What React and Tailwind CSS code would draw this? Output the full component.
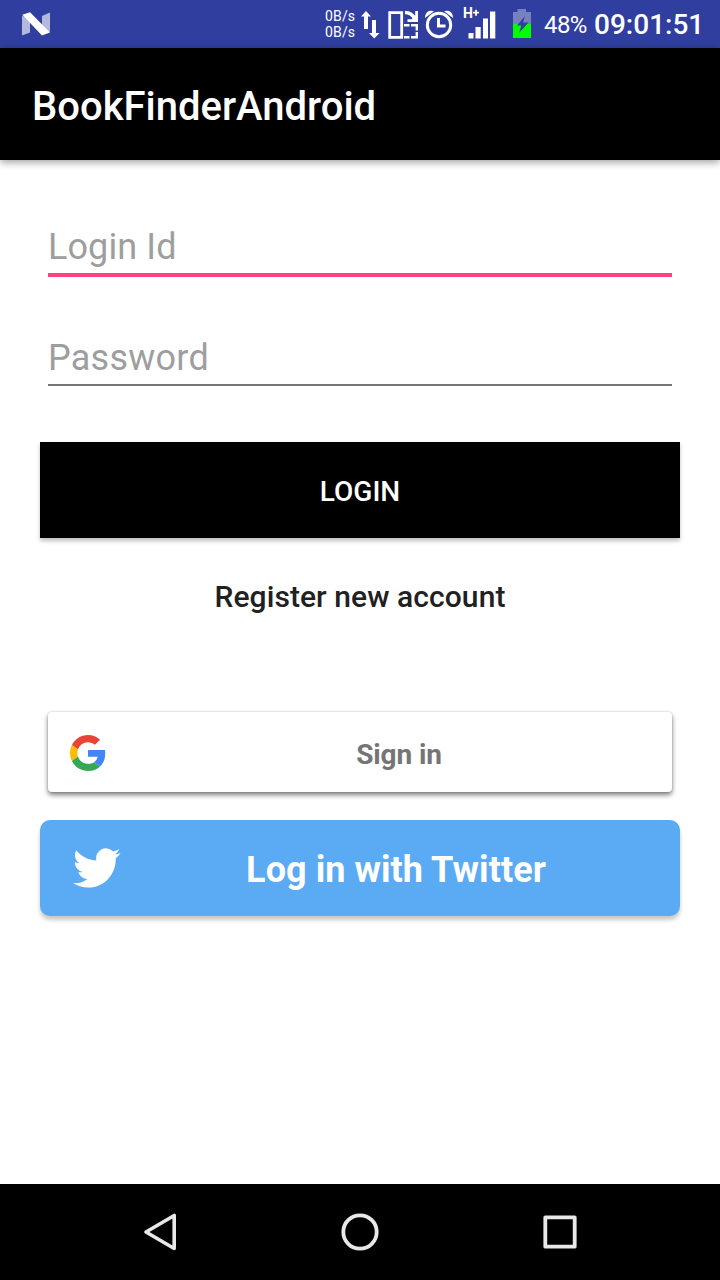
function StatusBar() {
  return (
    <div className="flex h-12 shrink-0 items-center bg-[#303f9f] text-white">
      <svg className="ml-5 shrink-0" width="32" height="48" viewBox="20 0 32 48">
        <path d="M22 15.5L30 20V32.5L22 35.5Z" fill="#b3b8dc" />
        <path d="M50 12.5L42 16V29L50 32Z" fill="#b3b8dc" />
        <path d="M22.3 14.8L30 12.2L50 32.5L42 35.6Z" fill="#fff" />
      </svg>
      <div className="ml-[273px] w-[35px] text-[14px] leading-4 tracking-[0.15px]">
        <div>0B/s</div>
        <div>0B/s</div>
      </div>
      <svg className="shrink-0" width="24" height="48" viewBox="360 0 24 48" fill="#fff">
        <path d="M366 11L371 16.5H368V29H364V16.5H361Z" />
        <path d="M372 20H376V33H379.5L374.3 38.5L369 33H372Z" />
      </svg>
      <svg className="shrink-0" width="38" height="48" viewBox="384 0 38 48" fill="none" stroke="#fff">
        <path d="M389.7 12.7H401.7V37.3H389.7Z" strokeWidth="2.8" />
        <path d="M404 25.2H409.5M411 25.2H418M404 37.2H409.5M411 37.2H418M416.8 25V30.5M416.8 32V38" strokeWidth="2.4" />
        <path d="M405 12.5C409 12.5 412.5 14.5 414.5 18.5" strokeWidth="3.6" />
        <path d="M416.6 11V20.7H407.5" strokeWidth="2.8" />
        <path d="M411 20.5L416.5 15V20.5Z" fill="#fff" strokeWidth="1" />
      </svg>
      <svg className="shrink-0" width="36" height="48" viewBox="422 0 36 48" fill="none" stroke="#fff">
        <circle cx="439" cy="25" r="11.7" strokeWidth="3" />
        <path d="M438.5 18V26H445.5" strokeWidth="3" />
        <path d="M425 18C425 12 429 9.5 434 11.2Z" fill="#fff" stroke="none" />
        <path d="M453 18C453 12 449 9.5 444 11.2Z" fill="#fff" stroke="none" />
      </svg>
      <div className="relative h-12 w-[50px] shrink-0">
        <span className="absolute top-[5px] left-[5px] text-[14px] leading-[16px] font-bold">H</span>
        <svg width="50" height="48" viewBox="458 0 50 48" fill="#fff">
          <path d="M468.5 33H473.5V38.5H468.5ZM475.5 27H480.7V38.5H475.5ZM483 18.5H488V38.5H483ZM490 11.5H495.3V38.5H490Z" />
          <path d="M473 11.8H479V13.6H473ZM475.1 9.7H476.9V15.7H475.1Z" />
        </svg>
      </div>
      <svg className="shrink-0" width="36" height="48" viewBox="508 0 36 48">
        <path d="M517.5 9H526V12H531V38H513V12H517.5Z" fill="#7881c0" />
        <path d="M513 24H531V38H513Z" fill="#0f0" />
        <path d="M525 16L517 25.5H521.3L519 33L528.5 22.5H523Z" fill="#303f9f" />
      </svg>
      <span className="w-[50px] pt-[2px] text-[24px] tracking-[-0.6px]">48%</span>
      <span className="pt-[2px] text-[28px] font-medium">09:01:51</span>
    </div>
  );
}

function GoogleLogo() {
  return (
    <svg className="ml-[22px] mt-[2px] shrink-0" width="36" height="36" viewBox="0 0 48 48">
      <path fill="#EA4335" d="M24 9.5c3.54 0 6.71 1.22 9.21 3.6l6.85-6.85C35.9 2.38 30.47 0 24 0 14.62 0 6.51 5.38 2.56 13.22l7.98 6.19C12.43 13.72 17.74 9.5 24 9.5z" />
      <path fill="#4285F4" d="M46.98 24.55c0-1.57-.15-3.09-.38-4.55H24v9.02h12.94c-.58 2.96-2.26 5.48-4.78 7.18l7.73 6c4.51-4.18 7.09-10.36 7.09-17.65z" />
      <path fill="#FBBC05" d="M10.53 28.59c-.48-1.45-.76-2.99-.76-4.59s.27-3.14.76-4.59l-7.98-6.19C.92 16.46 0 20.12 0 24c0 3.88.92 7.54 2.56 10.78l7.97-6.19z" />
      <path fill="#34A853" d="M24 48c6.48 0 11.93-2.13 15.89-5.81l-7.73-6c-2.15 1.45-4.92 2.3-8.16 2.3-6.26 0-11.57-4.22-13.47-9.91l-7.98 6.19C6.51 42.62 14.62 48 24 48z" />
    </svg>
  );
}

function TwitterLogo() {
  return (
    <svg className="ml-[33px] shrink-0" width="48" height="40" viewBox="0 2.1 24.2 19.9" preserveAspectRatio="none" fill="#fff">
      <path d="M23.953 4.57a10 10 0 01-2.825.775 4.958 4.958 0 002.163-2.723c-.951.555-2.005.959-3.127 1.184a4.92 4.92 0 00-8.384 4.482C7.69 8.095 4.067 6.13 1.64 3.162a4.822 4.822 0 00-.666 2.475c0 1.71.87 3.213 2.188 4.096a4.904 4.904 0 01-2.228-.616v.06a4.923 4.923 0 003.946 4.827 4.996 4.996 0 01-2.212.085 4.936 4.936 0 004.604 3.417 9.867 9.867 0 01-6.102 2.105c-.39 0-.779-.023-1.17-.067a13.995 13.995 0 007.557 2.209c9.053 0 13.998-7.496 13.998-13.985 0-.21 0-.42-.015-.63A9.935 9.935 0 0024 4.59z" />
    </svg>
  );
}

function NavigationBar() {
  return (
    <nav className="flex h-24 shrink-0 items-center justify-center gap-[152px] bg-black">
      <svg width="48" height="48" viewBox="0 0 48 48" fill="none" stroke="#e8e8e8" strokeWidth="3.6" strokeLinejoin="round">
        <path d="M10 24L38.2 7.5V40.5Z" />
      </svg>
      <svg width="48" height="48" viewBox="0 0 48 48" fill="none" stroke="#e8e8e8" strokeWidth="3.8">
        <circle cx="24" cy="24" r="16.7" />
      </svg>
      <svg width="48" height="48" viewBox="0 0 48 48" fill="none" stroke="#e8e8e8" strokeWidth="3.8" strokeLinejoin="round">
        <path d="M9.3 9.3H38.7V38.7H9.3Z" />
      </svg>
    </nav>
  );
}

export default function App() {
  return (
    <div className="flex h-[1280px] w-[720px] flex-col overflow-hidden bg-white font-['Roboto',sans-serif]">
      <StatusBar />
      <header className="z-10 flex h-28 shrink-0 items-center bg-black px-8 pt-1.5 shadow-[0_2px_8px_rgba(0,0,0,0.4)]">
        <h1 className="text-[40px] font-medium text-white">BookFinderAndroid</h1>
      </header>
      <main className="flex grow flex-col px-10">
        <div className="mx-2 mt-[60px] flex h-[57px] items-center border-b-4 border-[#ff4081]">
          <input className="w-full text-[36px] leading-[42px] tracking-[0.1px] outline-none placeholder:text-[#9e9e9e]" placeholder="Login Id" />
        </div>
        <div className="mx-2 mt-[54px] flex h-[55px] items-center border-b-2 border-[#757575]">
          <input className="w-full text-[36px] leading-[42px] tracking-[0.25px] outline-none placeholder:text-[#9e9e9e]" placeholder="Password" />
        </div>
        <button className="mt-14 h-24 bg-black pt-1 text-[28px] font-medium text-white shadow-[0_3px_4px_rgba(0,0,0,0.25)]">LOGIN</button>
        <div className="mt-[39px] h-10 text-center text-[30px] leading-10 font-medium tracking-[0.07px] text-[#212121]">Register new account</div>
        <button className="mx-2 mt-[95px] flex h-20 items-center rounded bg-white shadow-[0_3px_5px_rgba(0,0,0,0.5),0_0_2px_rgba(0,0,0,0.2)]">
          <GoogleLogo />
          <span className="ml-[20px] grow pt-1.5 text-center text-[28px] font-bold tracking-[-0.1px] text-[#757575]">Sign in</span>
        </button>
        <button className="mt-7 flex h-24 items-center rounded-[10px] bg-[#5aaaf4] shadow-[0_4px_4px_rgba(0,0,0,0.22)]">
          <TwitterLogo />
          <span className="grow pt-[3px] pr-[9px] text-center text-[36px] font-bold tracking-[0.06px] text-white">Log in with Twitter</span>
        </button>
      </main>
      <NavigationBar />
    </div>
  );
}
